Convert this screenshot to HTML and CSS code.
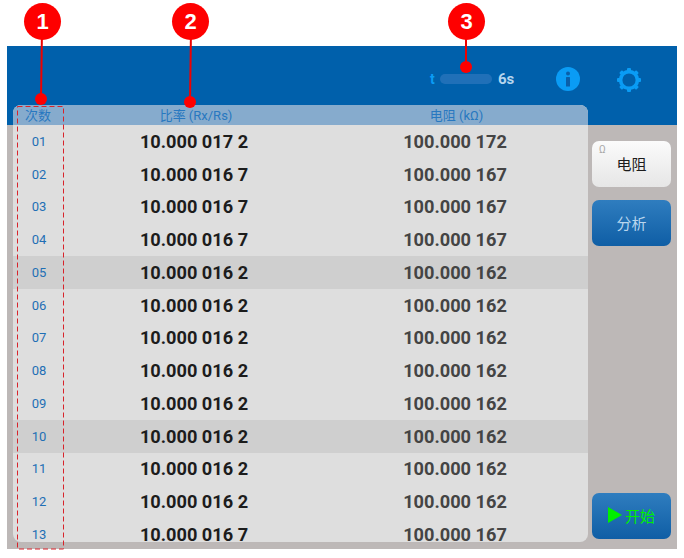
FILE: index.html
```html
<!DOCTYPE html>
<html lang="zh">
<head>
<meta charset="utf-8">
<title>电阻</title>
<link rel="stylesheet" href="styles.css">
</head>
<body>
<div class="app">
  <header class="topbar">
    <div class="timer">
      <span class="timer-t">t</span>
      <span class="timer-bar"></span>
      <span class="timer-val">6s</span>
    </div>
    <svg class="icon icon-info" viewBox="0 0 24 24"><circle cx="12" cy="12" r="12" fill="#0a9cf5"/><circle cx="12" cy="6.6" r="2" fill="#0a5fa9"/><rect x="10" y="10" width="4" height="9.5" rx=".6" fill="#0a5fa9"/></svg>
    <svg class="icon icon-gear" viewBox="0 0 26 26">
      <circle cx="13" cy="13" r="8.4" fill="none" stroke="#0a9cf5" stroke-width="3.6"/>
      <g fill="#0a9cf5">
        <rect x="11" y="1" width="4" height="4" rx="1"/>
        <rect x="11" y="1" width="4" height="4" rx="1" transform="rotate(45 13 13)"/>
        <rect x="11" y="1" width="4" height="4" rx="1" transform="rotate(90 13 13)"/>
        <rect x="11" y="1" width="4" height="4" rx="1" transform="rotate(135 13 13)"/>
        <rect x="11" y="1" width="4" height="4" rx="1" transform="rotate(180 13 13)"/>
        <rect x="11" y="1" width="4" height="4" rx="1" transform="rotate(225 13 13)"/>
        <rect x="11" y="1" width="4" height="4" rx="1" transform="rotate(270 13 13)"/>
        <rect x="11" y="1" width="4" height="4" rx="1" transform="rotate(315 13 13)"/>
      </g>
    </svg>
  </header>
  <div class="content">
    <main class="panel">
      <div class="row head"><span>次数</span><span class="head-ratio">比率 (Rx/Rs)</span><span>电阻 (kΩ)</span></div>
      <div class="row"><span class="idx">01</span><b>10.000 017 2</b><b class="res">100.000 172</b></div>
      <div class="row"><span class="idx">02</span><b>10.000 016 7</b><b class="res">100.000 167</b></div>
      <div class="row"><span class="idx">03</span><b>10.000 016 7</b><b class="res">100.000 167</b></div>
      <div class="row"><span class="idx">04</span><b>10.000 016 7</b><b class="res">100.000 167</b></div>
      <div class="row alt"><span class="idx">05</span><b>10.000 016 2</b><b class="res">100.000 162</b></div>
      <div class="row"><span class="idx">06</span><b>10.000 016 2</b><b class="res">100.000 162</b></div>
      <div class="row"><span class="idx">07</span><b>10.000 016 2</b><b class="res">100.000 162</b></div>
      <div class="row"><span class="idx">08</span><b>10.000 016 2</b><b class="res">100.000 162</b></div>
      <div class="row"><span class="idx">09</span><b>10.000 016 2</b><b class="res">100.000 162</b></div>
      <div class="row alt"><span class="idx">10</span><b>10.000 016 2</b><b class="res">100.000 162</b></div>
      <div class="row"><span class="idx">11</span><b>10.000 016 2</b><b class="res">100.000 162</b></div>
      <div class="row"><span class="idx">12</span><b>10.000 016 2</b><b class="res">100.000 162</b></div>
      <div class="row"><span class="idx">13</span><b>10.000 016 7</b><b class="res">100.000 167</b></div>
    </main>
    <aside class="side">
      <button class="btn btn-light"><span class="ohm">Ω</span>电阻</button>
      <button class="btn btn-blue">分析</button>
      <button class="btn btn-blue btn-start"><span class="play"></span>开始</button>
    </aside>
  </div>
</div>

<svg class="leaders" width="684" height="558" viewBox="0 0 684 558">
  <rect x="17.5" y="106.5" width="46" height="442.5" fill="none" stroke="#d8232a" stroke-dasharray="5 3"/>
  <g stroke="#f00000" stroke-width="2" fill="none">
    <path d="M42 30 L41 98"/>
    <path d="M191 30 L190 102"/>
    <path d="M466 30 V67"/>
  </g>
  <g fill="#fe0000">
    <circle cx="41" cy="99" r="6"/>
    <circle cx="190" cy="102" r="6"/>
    <circle cx="466" cy="67" r="6"/>
  </g>
</svg>
<span class="badge b1">1</span>
<span class="badge b2">2</span>
<span class="badge b3">3</span>
</body>
</html>
```

FILE: styles.css
```css
* { box-sizing: border-box; }
html, body { margin: 0; padding: 0; }
body {
  width: 684px;
  height: 558px;
  background: #fff;
  overflow: hidden;
  position: relative;
  padding: 46px 7px 9px;
  font-family: Roboto, "Noto Sans CJK SC", sans-serif;
}
.app {
  width: 670px;
  height: 503px;
  background: #bdb8b7;
  display: flex;
  flex-direction: column;
  position: relative;
}
.topbar {
  height: 79px;
  flex: none;
  background: #0060ab;
  display: flex;
  align-items: flex-start;
  padding: 20px 0 0 423px;
}
.timer {
  display: flex;
  align-items: center;
  height: 26px;
  width: 122px;
  font-size: 14px;
  font-weight: 700;
}
.timer-t { color: #0a9cf5; width: 10px; }
.timer-bar {
  width: 52px;
  height: 10px;
  border-radius: 5px;
  background: #2070b8;
}
.timer-val { color: #b5d5ee; margin-left: 6px; font-size: 15px; }
.icon { display: block; flex: none; }
.icon-info { width: 24px; height: 24px; margin: 1px 0 0 4px; }
.icon-gear { width: 26px; height: 26px; margin: 1px 0 0 36px; }

.content {
  position: relative;
  flex: 1;
  display: flex;
  min-height: 0;
}
.panel {
  width: 575px;
  height: 437px;
  margin: -20px 0 0 6px;
  border-radius: 8px;
  background: #dedede;
  position: relative;
  z-index: 1;
}
.row {
  display: grid;
  grid-template-columns: 50px 262px 263px;
  align-items: center;
  justify-items: center;
  height: 32.75px;
  font-size: 18.2px;
  color: #1c1c1c;
}
.row.alt { background: #cfcfcf; }
.row.head {
  height: 20px;
  padding-bottom: 2px;
  background: #86abcd;
  border-radius: 8px 8px 0 0;
  color: #2878c0;
  font-size: 13px;
}
.head-ratio { margin-left: 4px; }
.idx { color: #1f6fb5; font-size: 13px; margin-left: 2px; }
.res { color: #444; margin-right: 3px; }

.side {
  width: 89px;
  flex: none;
  display: flex;
  flex-direction: column;
  padding: 16px 0 10px 4px;
  gap: 13px;
}
.btn {
  width: 79px;
  height: 46px;
  flex: none;
  border: 0;
  border-radius: 7px;
  font-family: inherit;
  font-size: 15px;
  padding: 0 0 2px;
  position: relative;
}
.btn-light {
  background: linear-gradient(#fbfbfb, #e6e6e6);
  color: #1c1c1c;
}
.btn-blue {
  background: linear-gradient(#2f7dbf, #0f5ea5);
  color: #b9d6ee;
}
.ohm {
  position: absolute;
  left: 7px;
  top: 3px;
  font-size: 10px;
  line-height: 12px;
  color: #a8a8a8;
}
.btn-start {
  margin-top: auto;
  color: #00f000;
  display: flex;
  align-items: center;
  justify-content: center;
  gap: 3px;
}
.play {
  width: 0;
  height: 0;
  border-left: 14px solid #00f000;
  border-top: 8px solid transparent;
  border-bottom: 8px solid transparent;
}

.leaders {
  position: absolute;
  left: 0;
  top: 0;
  z-index: 3;
}
.badge {
  position: absolute;
  top: 3px;
  width: 37px;
  height: 37px;
  border-radius: 50%;
  background: #fe0000;
  color: #fff;
  font: 700 22px/37px "Liberation Sans", sans-serif;
  text-align: center;
  z-index: 4;
}
.b1 { left: 24px; }
.b2 { left: 172px; }
.b3 { left: 448px; }
```
